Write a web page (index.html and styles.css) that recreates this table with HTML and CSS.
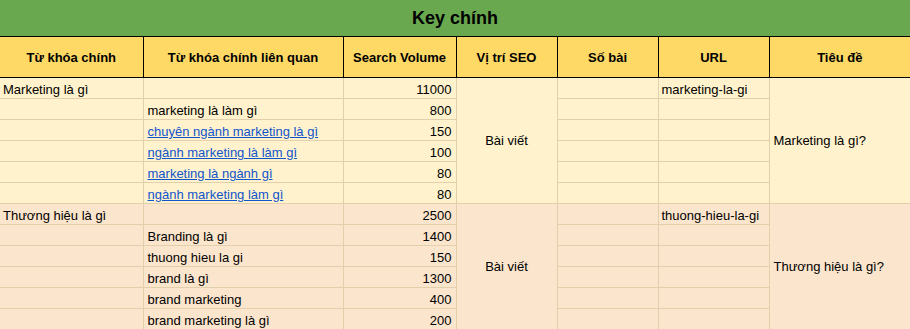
FILE: index.html
```html
<!DOCTYPE html>
<html lang="vi">
<head>
<meta charset="utf-8">
<title>Key chính</title>
<link rel="stylesheet" href="styles.css">
</head>
<body>
<table class="sheet">
  <colgroup>
    <col class="c1"><col class="c2"><col class="c3"><col class="c4"><col class="c5"><col class="c6"><col class="c7">
  </colgroup>
  <thead>
    <tr class="title-row"><th colspan="7" class="title">Key chính</th></tr>
    <tr class="head-row">
      <th>Từ khóa chính</th>
      <th>Từ khóa chính liên quan</th>
      <th>Search Volume</th>
      <th>Vị trí SEO</th>
      <th>Số bài</th>
      <th>URL</th>
      <th>Tiêu đề</th>
    </tr>
  </thead>
  <tbody class="g1">
    <tr><td>Marketing là gì</td><td></td><td class="num">11000</td><td rowspan="6" class="center">Bài viết</td><td></td><td>marketing-la-gi</td><td rowspan="6" class="mid">Marketing là gì?</td></tr>
    <tr><td></td><td>marketing là làm gì</td><td class="num">800</td><td></td><td></td></tr>
    <tr><td></td><td><a href="#">chuyên ngành marketing là gì</a></td><td class="num">150</td><td></td><td></td></tr>
    <tr><td></td><td><a href="#">ngành marketing là làm gì</a></td><td class="num">100</td><td></td><td></td></tr>
    <tr><td></td><td><a href="#">marketing là ngành gì</a></td><td class="num">80</td><td></td><td></td></tr>
    <tr><td></td><td><a href="#">ngành marketing làm gì</a></td><td class="num">80</td><td></td><td></td></tr>
  </tbody>
  <tbody class="g2">
    <tr><td>Thương hiệu là gì</td><td></td><td class="num">2500</td><td rowspan="6" class="center">Bài viết</td><td></td><td>thuong-hieu-la-gi</td><td rowspan="6" class="mid">Thương hiệu là gì?</td></tr>
    <tr><td></td><td>Branding là gì</td><td class="num">1400</td><td></td><td></td></tr>
    <tr><td></td><td>thuong hieu la gi</td><td class="num">150</td><td></td><td></td></tr>
    <tr><td></td><td>brand là gì</td><td class="num">1300</td><td></td><td></td></tr>
    <tr><td></td><td>brand marketing</td><td class="num">400</td><td></td><td></td></tr>
    <tr><td></td><td>brand marketing là gì</td><td class="num">200</td><td></td><td></td></tr>
  </tbody>
</table>
</body>
</html>
```
FILE: styles.css
```css
html, body {
  margin: 0;
  padding: 0;
  background: #ffffff;
  overflow: hidden;
}
.sheet {
  width: 910px;
  table-layout: fixed;
  border-collapse: collapse;
  font-family: "Liberation Sans", Arial, sans-serif;
  font-size: 13px;
  color: #000;
}
.c1 { width: 143px; }
.c2 { width: 200px; }
.c3 { width: 113px; }
.c4 { width: 101px; }
.c5 { width: 101px; }
.c6 { width: 111px; }
.c7 { width: 141px; }

.title {
  height: 36px;
  padding: 0;
  background: #6aa84f;
  font-size: 18px;
  font-weight: bold;
  text-align: center;
  vertical-align: middle;
  border: none;
  border-bottom: 1px solid #000;
}
.head-row th {
  height: 40px;
  padding: 0 2px;
  background: #ffd966;
  font-weight: bold;
  text-align: center;
  vertical-align: middle;
  border: 1px solid #000;
  white-space: nowrap;
}
.head-row th:first-child { border-left: none; }
.head-row th:last-child { border-right: none; }

td {
  height: 20px;
  padding: 0 3px 0 3px;
  line-height: 16px;
  vertical-align: bottom;
  border: 1px solid #e2d0ad;
  white-space: nowrap;
  overflow: hidden;
}
tr td:first-child { border-left: none; }
td.mid:last-child, tr td:last-child { border-right: none; }
td:nth-child(2) { padding-left: 4px; }
.g1 td { background: #fff2cc; }
.g2 td { background: #fce5cd; }
.num { text-align: right; padding-right: 4px; }
.center { text-align: center; vertical-align: middle; }
.mid { text-align: left; vertical-align: middle; padding-left: 4px; }
a { color: #1155cc; text-decoration: underline; }
```
